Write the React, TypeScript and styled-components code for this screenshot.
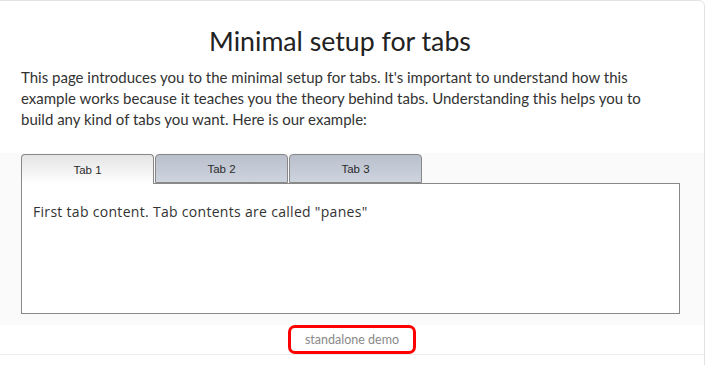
import * as React from 'react';
import styled, { createGlobalStyle } from 'styled-components';

const GlobalStyle = createGlobalStyle`
  html, body {
    margin: 0;
    padding: 0;
    background: #fff;
    overflow: hidden;
  }
`;

const Card = styled.div`
  margin-left: -6px;
  width: 711px;
  box-sizing: border-box;
  border: 1px solid #e2e2e2;
  border-radius: 6px;
  background: #fff;
  font-family: Lato, 'Open Sans', sans-serif;
`;

const Header = styled.header`
  padding: 25px 45px 23px 26px;
`;

const Title = styled.h1`
  margin: 0 0 10px;
  text-align: center;
  font-size: 26.7px;
  line-height: 31px;
  font-weight: normal;
  color: #222;
`;

const Intro = styled.p`
  margin: 0;
  font-size: 15px;
  line-height: 21px;
  color: #333;
`;

const DemoArea = styled.section`
  background: #fafafa;
  padding: 1px 24px 11px 26px;
`;

const TabList = styled.ul`
  display: flex;
  gap: 1px;
  margin: 0;
  padding: 0;
  list-style: none;
  height: 29px;
`;

const Tab = styled.li<{ $active?: boolean }>`
  width: 133px;
  box-sizing: border-box;
  height: ${(p) => (p.$active ? '30px' : '29px')};
  border: 1px solid #888;
  border-bottom: ${(p) => (p.$active ? 'none' : '1px solid #888')};
  border-radius: 4px 4px 0 0;
  background: ${(p) =>
    p.$active
      ? 'linear-gradient(to bottom, #e4e4e4, #ffffff)'
      : 'linear-gradient(to bottom, #b9c0cc, #ced4de)'};
  position: relative;
  z-index: ${(p) => (p.$active ? 1 : 0)};
  display: flex;
  align-items: center;
  justify-content: center;
  font-family: 'Liberation Sans', Arial, sans-serif;
  font-size: 11.5px;
  color: #2a2a2a;
  cursor: pointer;
`;

const Pane = styled.div`
  height: 131px;
  box-sizing: border-box;
  border: 1px solid #888;
  background: #fff;
  padding: 18px 11px;
  font-family: 'Open Sans', sans-serif;
  font-size: 14px;
  letter-spacing: 0.3px;
  line-height: 19px;
  color: #333;
`;

const Footer = styled.footer`
  display: flex;
  justify-content: center;
  border-bottom: 1px solid #ececec;
  height: 29px;
  padding-left: 5px;
`;

const DemoLink = styled.a`
  display: flex;
  align-items: center;
  box-sizing: border-box;
  height: 29px;
  padding: 0 14px 1px;
  border: 3px solid #ff0000;
  border-radius: 7px;
  font-size: 12.5px;
  color: #8a8a8a;
  text-decoration: none;
`;

const Rest = styled.div`
  height: 40px;
`;

export default function App() {
  const [active, setActive] = React.useState(0);
  const tabs = ['Tab 1', 'Tab 2', 'Tab 3'];
  const panes = [
    'First tab content. Tab contents are called "panes"',
    'Second tab content',
    'Third tab content',
  ];
  return (
    <>
      <GlobalStyle />
      <Card>
        <Header>
          <Title>Minimal setup for tabs</Title>
          <Intro>
            This page introduces you to the minimal setup for tabs. It's important to understand how this
            example works because it teaches you the theory behind tabs. Understanding this helps you to
            build any kind of tabs you want. Here is our example:
          </Intro>
        </Header>
        <DemoArea>
          <TabList>
            {tabs.map((t, i) => (
              <Tab key={t} $active={i === active} onClick={() => setActive(i)}>
                {t}
              </Tab>
            ))}
          </TabList>
          <Pane>{panes[active]}</Pane>
        </DemoArea>
        <Footer>
          <DemoLink href="#">standalone demo</DemoLink>
        </Footer>
        <Rest />
      </Card>
    </>
  );
}
